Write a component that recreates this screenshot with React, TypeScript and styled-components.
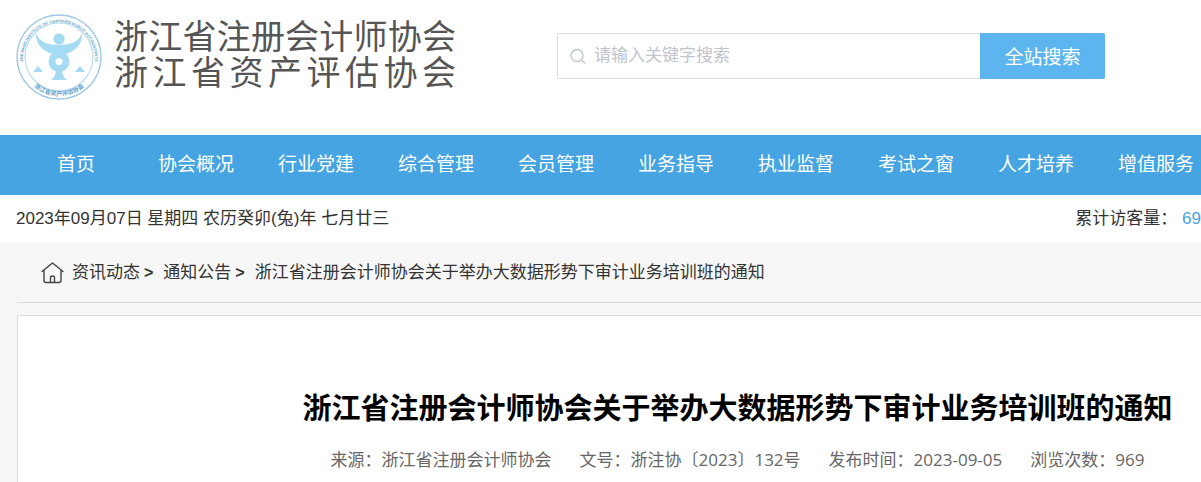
import React from "react";
import styled, { createGlobalStyle } from "styled-components";

const arial = `"Liberation Sans", "Noto Sans CJK SC", sans-serif`;
const yahei = `"Open Sans", "Noto Sans CJK SC", sans-serif`;

const GlobalStyle = createGlobalStyle`
  *, *::before, *::after { box-sizing: border-box; }
  body {
    margin: 0;
    background: #f7f7f7;
    color: #333;
    font-family: ${arial};
    font-size: 17px;
    line-height: 24px;
    overflow: hidden;
  }
  a { color: inherit; text-decoration: none; }
`;

const Page = styled.div`
  display: flex;
  flex-direction: column;
  min-height: 100vh;
`;

const Header = styled.header`
  display: flex;
  align-items: flex-start;
  gap: 101px;
  height: 135px;
  padding: 13px 16px 0;
  background: #fff;
`;

const Brand = styled.a`
  display: flex;
  flex: none;
  gap: 12px;
`;

const BrandNames = styled.span`
  display: flex;
  flex-direction: column;
  width: 342px;
  padding-top: 6px;
`;

const BrandName = styled.span`
  color: #555;
  font-size: 34px;
  line-height: 36px;
  text-align: justify;
  text-align-last: justify;
`;

const SearchForm = styled.form`
  display: flex;
  flex: 0 1 548px;
  height: 46px;
  margin-top: 20px;
`;

const SearchField = styled.label`
  display: flex;
  flex: 1;
  align-items: center;
  gap: 8px;
  min-width: 0;
  padding: 0 12px;
  border: 1px solid #dcdfe6;
  border-right: 0;
  border-radius: 2px 0 0 2px;
`;

const SearchInput = styled.input`
  flex: 1;
  min-width: 0;
  padding: 0;
  border: 0;
  outline: 0;
  background: none;
  color: #606266;
  font: inherit;
  &::placeholder { color: #c0c4cc; opacity: 1; }
`;

const SearchButton = styled.button`
  flex: none;
  width: 125px;
  padding: 0 0 2px;
  border: 0;
  border-radius: 0 2px 2px 0;
  background: #5cb5ee;
  color: #fff;
  font-family: ${arial};
  font-size: 19px;
`;

const Nav = styled.nav`
  display: flex;
  height: 60px;
  padding-left: 16px;
  overflow: hidden;
  background: #45a4e1;
`;

const NavLink = styled.a`
  flex: 0 0 120px;
  color: #fff;
  font-size: 19px;
  line-height: 60px;
  text-align: center;
`;

const InfoBar = styled.div`
  display: flex;
  align-items: center;
  justify-content: space-between;
  height: 48px;
  padding-left: 16px;
  background: #fff;
  white-space: nowrap;
`;

const VisitorCount = styled.span`
  color: #45a4e1;
`;

const Main = styled.main`
  display: flex;
  flex: 1;
  flex-direction: column;
  gap: 12px;
  padding-left: 17px;
`;

const Breadcrumb = styled.nav`
  display: flex;
  align-items: center;
  height: 60px;
  padding-left: 24px;
  border-bottom: 1px solid #dcdcdc;
  white-space: nowrap;
`;

const Crumb = styled.a`
  margin-left: 7px;
`;

const Separator = styled.span`
  margin: 0 3px 0 4px;
  font-weight: bold;
  font-size: 16px;
`;

const Article = styled.article`
  flex: 1;
  padding: 72px 16px 0 272px;
  border: 1px solid #dcdcdc;
  border-width: 1px 0 0 1px;
  background: #fff;
  text-align: center;
`;

const Title = styled.h1`
  margin: 0;
  color: #000;
  font-size: 29px;
  line-height: 42px;
  white-space: nowrap;
`;

const Meta = styled.div`
  display: flex;
  justify-content: center;
  gap: 28px;
  margin-top: 18px;
  color: #666;
  font-family: ${yahei};
  white-space: nowrap;
`;

const Emblem = () => (
  <svg width="86" height="88" viewBox="0 0 86 88" aria-hidden="true">
    <defs>
      <path id="arc-top" d="M8 54 A36 36 0 1 1 78 54" />
      <path id="arc-bottom" d="M15 71 A39.500 39.500 0 0 0 71 71" />
    </defs>
    <g fill="none" stroke="#9cc8e6">
      <circle cx="43" cy="44" r="42" strokeWidth="1.400" />
      <circle cx="43" cy="44" r="34" stroke="#b9dcf0" strokeWidth="1.200" />
    </g>
    <g fill="#5b9fcd" fontFamily={arial} fontWeight="bold">
      <text fontSize="4" textAnchor="middle">
        <textPath href="#arc-top" startOffset="50%">ZHEJIANG INSTITUTE OF CERTIFIED PUBLIC ACCOUNTANTS</textPath>
      </text>
      <text fontSize="6" textAnchor="middle">
        <textPath href="#arc-bottom" startOffset="50%">浙江省资产评估协会</textPath>
      </text>
    </g>
    <g fill="#a6dcf3">
      <circle cx="43" cy="26" r="5.700" />
      <path d="M20 20 C23 29 32 32 43 32 C54 32 63 29 66 20 C67 31 59 38 50 41 L36 41 C27 38 19 31 20 20Z" />
      <path
        fillRule="evenodd"
        d="M43 38 A10.500 10.500 0 1 1 43 59 A10.500 10.500 0 1 1 43 38Z M43 45 A3.500 3.500 0 1 0 43 52 A3.500 3.500 0 1 0 43 45Z"
      />
      <path d="M40 57 H46 C46 61 48 65 51 67 H35 C38 65 40 61 40 57Z" />
      <path d="M17 59 L22 53 L27 59Z M59 59 L64 53 L69 59Z" />
    </g>
  </svg>
);

const SearchIcon = () => (
  <svg width="16" height="18" viewBox="0 0 16 18" fill="none" stroke="#c0c4cc" strokeWidth="1.300" aria-hidden="true">
    <circle cx="7" cy="8.500" r="6" />
    <path d="M11.400 12.900 L15.300 16.600" />
  </svg>
);

const HomeIcon = () => (
  <svg
    width="24"
    height="22"
    viewBox="0 0 24 22"
    fill="none"
    stroke="#444"
    strokeWidth="1.400"
    strokeLinecap="round"
    strokeLinejoin="round"
    aria-hidden="true"
  >
    <path d="M1 9.500 L11.500 1 L22 9.500" />
    <path d="M3 8.500 V18.500 Q3 20.500 5 20.500 H18 Q20 20.500 20 18.500 V8.500" />
    <path d="M9.500 20 V15.500 Q9.500 14 11.500 14 Q13.500 14 13.500 15.500 V20" />
  </svg>
);

const navItems = [
  "首页",
  "协会概况",
  "行业党建",
  "综合管理",
  "会员管理",
  "业务指导",
  "执业监督",
  "考试之窗",
  "人才培养",
  "增值服务",
];

const metaItems = [
  "来源：浙江省注册会计师协会",
  "文号：浙注协〔2023〕132号",
  "发布时间：2023-09-05",
  "浏览次数：969",
];

const articleTitle = "浙江省注册会计师协会关于举办大数据形势下审计业务培训班的通知";

export default function App() {
  return (
    <Page lang="zh-CN">
      <GlobalStyle />
      <Header>
        <Brand href="#">
          <Emblem />
          <BrandNames>
            <BrandName>浙江省注册会计师协会</BrandName>
            <BrandName>浙江省资产评估协会</BrandName>
          </BrandNames>
        </Brand>
        <SearchForm onSubmit={(e) => e.preventDefault()}>
          <SearchField htmlFor="keyword">
            <SearchIcon />
            <SearchInput id="keyword" type="text" placeholder="请输入关键字搜索" />
          </SearchField>
          <SearchButton type="submit">全站搜索</SearchButton>
        </SearchForm>
      </Header>
      <Nav>
        {navItems.map((item) => (
          <NavLink key={item} href="#">{item}</NavLink>
        ))}
      </Nav>
      <InfoBar>
        <span>2023年09月07日 星期四 农历癸卯(兔)年 七月廿三</span>
        <span>
          累计访客量： <VisitorCount>69</VisitorCount>
        </span>
      </InfoBar>
      <Main>
        <Breadcrumb>
          <HomeIcon />
          <Crumb href="#">资讯动态</Crumb>
          <Separator>&gt;</Separator>
          <Crumb href="#">通知公告</Crumb>
          <Separator>&gt;</Separator>
          <Crumb href="#">{articleTitle}</Crumb>
        </Breadcrumb>
        <Article>
          <Title>{articleTitle}</Title>
          <Meta>
            {metaItems.map((item) => (
              <span key={item}>{item}</span>
            ))}
          </Meta>
        </Article>
      </Main>
    </Page>
  );
}
